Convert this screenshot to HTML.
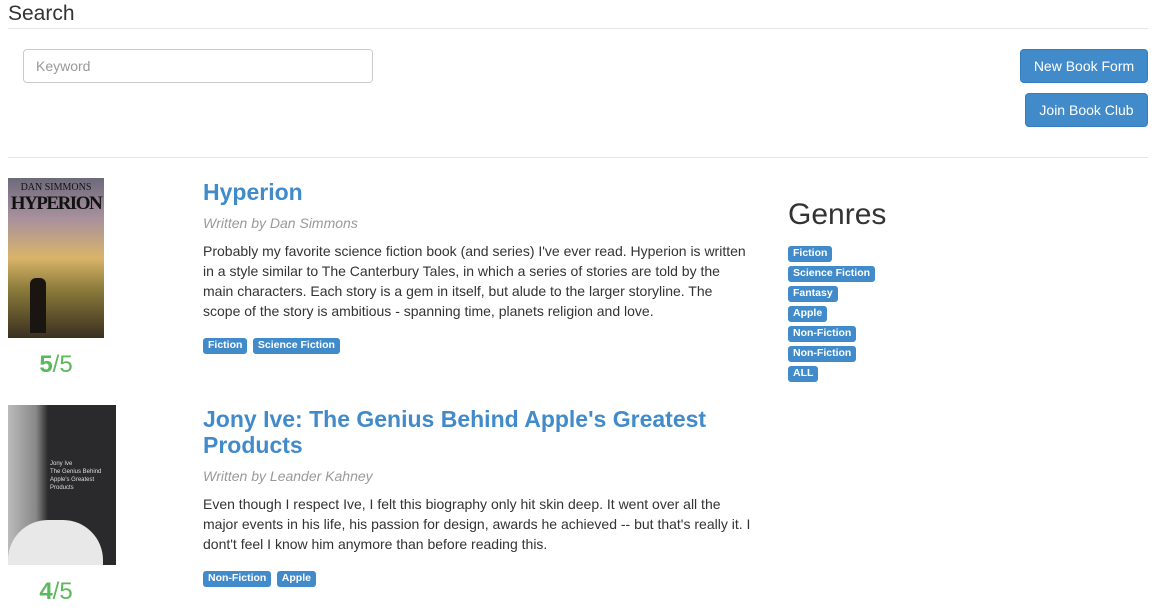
<!DOCTYPE html>
<html><head><style>
body{margin:0;font-family:"Liberation Sans",sans-serif;color:#333;width:1176px;height:611px;overflow:hidden;position:relative;background:#fff}
.a{position:absolute}
.lbl{display:inline-block;background:#428bca;color:#fff;font-size:10.5px;font-weight:bold;padding:2px 5px 3px;border-radius:3px;line-height:11px;margin-right:1px}
.btn{position:absolute;background:#428bca;border:1px solid #357ebd;color:#fff;font-size:14px;border-radius:4px;height:32px;line-height:32px;text-align:center}
h2{margin:0;color:#428bca;font-weight:bold;font-size:23px;line-height:26px}
.by{color:#999;font-style:italic;font-size:14px}
p{margin:0;font-size:14px;line-height:20px}
.r{font-size:24px;color:#5cb85c;text-align:center}
</style></head><body>
<div class="a" style="left:8px;top:2px;font-size:21px">Search</div>
<div class="a" style="left:8px;top:28px;width:1140px;border-top:1px solid #e5e5e5"></div>
<div class="a" style="left:23px;top:49px;width:348px;height:32px;border:1px solid #ccc;border-radius:4px;font-size:14px;color:#999;line-height:32px;text-indent:12px">Keyword</div>
<div class="btn" style="left:1020px;top:49px;width:126px">New Book Form</div>
<div class="btn" style="left:1025px;top:93px;width:121px">Join Book Club</div>
<div class="a" style="left:8px;top:157px;width:1140px;border-top:1px solid #e5e5e5"></div>

<div class="a" style="left:8px;top:178px;width:96px;height:160px;overflow:hidden;background:linear-gradient(#6d6a7a 0%,#a8909e 25%,#d9b46a 50%,#8a7a3a 70%,#3a3020 100%)">
<div style="font-family:'Liberation Serif',serif;font-size:10px;color:#111;text-align:center;margin-top:4px">DAN SIMMONS</div>
<div style="font-family:'Liberation Serif',serif;font-size:19px;font-weight:bold;color:#111;text-align:center;letter-spacing:-1.5px">HYPERION</div>
<div style="position:absolute;left:22px;top:100px;width:16px;height:55px;background:#1a1510;border-radius:6px 6px 0 0"></div>
</div>
<div class="a r" style="left:8px;top:351px;width:96px"><b>5</b>/5</div>
<div class="a" style="left:203px;top:179px;width:550px">
<h2>Hyperion</h2>
<div class="by" style="margin-top:10px">Written by Dan Simmons</div>
<p style="margin-top:10px">Probably my favorite science fiction book (and series) I've ever read. Hyperion is written in a style similar to The Canterbury Tales, in which a series of stories are told by the main characters. Each story is a gem in itself, but alude to the larger storyline. The scope of the story is ambitious - spanning time, planets religion and love.</p>
<div style="margin-top:14px"><span class="lbl">Fiction</span> <span class="lbl">Science Fiction</span></div>
</div>

<div class="a" style="left:8px;top:405px;width:108px;height:160px;background:#2a2a2c;overflow:hidden">
<div style="position:absolute;left:0;top:0;width:40px;height:160px;background:linear-gradient(90deg,#bbb,#888 70%,#2a2a2c)"></div>
<div style="position:absolute;left:0;top:115px;width:95px;height:45px;background:#e8e8e8;border-radius:40px 40px 0 0"></div>
<div style="position:absolute;left:42px;top:55px;font-size:6px;color:#ddd;line-height:8px">Jony Ive<br>The Genius Behind<br>Apple's Greatest<br>Products</div>
</div>
<div class="a r" style="left:8px;top:578px;width:96px"><b>4</b>/5</div>
<div class="a" style="left:203px;top:406px;width:556px">
<h2>Jony Ive: The Genius Behind Apple's Greatest Products</h2>
<div class="by" style="margin-top:10px">Written by Leander Kahney</div>
<p style="margin-top:10px">Even though I respect Ive, I felt this biography only hit skin deep. It went over all the major events in his life, his passion for design, awards he achieved -- but that's really it. I dont't feel I know him anymore than before reading this.</p>
<div style="margin-top:14px"><span class="lbl">Non-Fiction</span> <span class="lbl">Apple</span></div>
</div>

<div class="a" style="left:788px;top:198px;font-size:30px">Genres</div>
<div class="a" style="left:788px;top:242px;line-height:20px">
<span class="lbl">Fiction</span><br><span class="lbl">Science Fiction</span><br><span class="lbl">Fantasy</span><br><span class="lbl">Apple</span><br><span class="lbl">Non-Fiction</span><br><span class="lbl">Non-Fiction</span><br><span class="lbl">ALL</span>
</div>
</body></html>
